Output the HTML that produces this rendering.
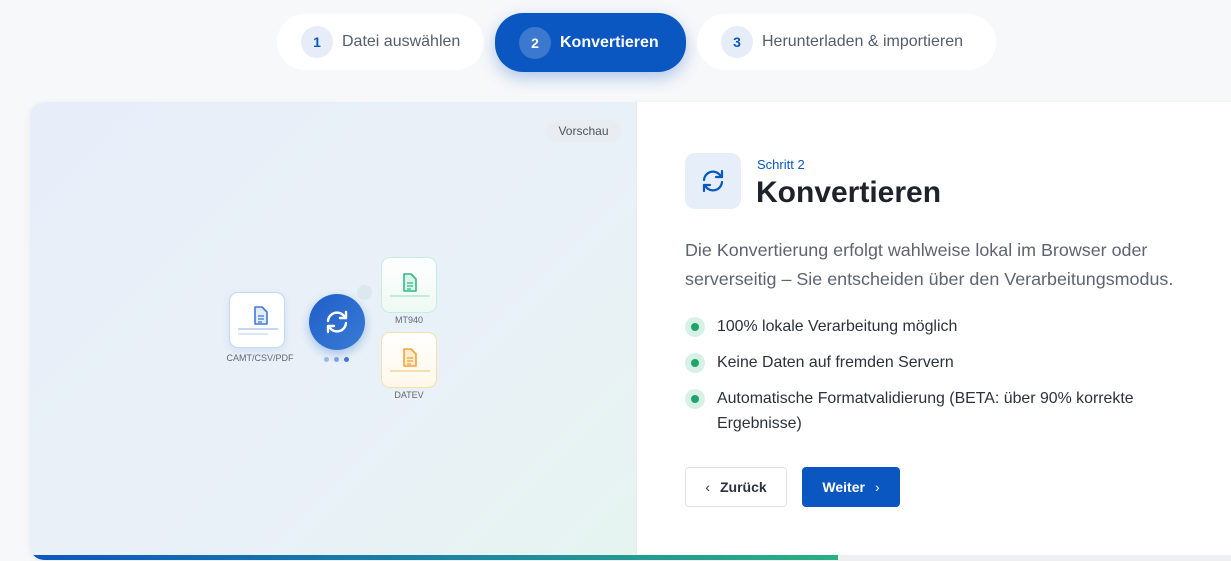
<!DOCTYPE html>
<html><head><meta charset="utf-8"><style>
*{box-sizing:border-box;margin:0;padding:0}
body{width:1231px;height:561px;overflow:hidden;background:#f7f8fa;font-family:"Liberation Sans",sans-serif;position:relative}
.pill{position:absolute;top:14px;height:56px;border-radius:28px;background:#fff;display:flex;align-items:center;padding-left:24px;font-size:16px;color:#555d6b}
.pill .n{width:32px;height:32px;border-radius:50%;background:#e6edf8;color:#0b57c2;font-weight:bold;font-size:14px;display:flex;align-items:center;justify-content:center;margin-right:9px}
.pill.act{background:#0b57c2;color:#fff;font-weight:bold;top:13px;height:59px;box-shadow:0 6px 16px rgba(11,87,194,.3)}
.pill.act .n{background:rgba(255,255,255,.2);color:#fff}
.card{position:absolute;left:30px;top:102px;width:1220px;height:458px;border-radius:14px;overflow:hidden;background:#fff;box-shadow:0 2px 8px rgba(0,0,0,.06)}
.left{position:absolute;left:0;top:0;width:607px;height:100%;background:linear-gradient(135deg,#e8eef9 0%,#e9f1f8 60%,#e6f4f0 100%);border-right:1px solid #e8ecf1}
.vor{position:absolute;left:516px;top:18px;width:75px;height:22px;border-radius:11px;background:#e9edf2;font-size:12px;color:#4a5160;text-align:center;line-height:22px}
.doc{position:absolute;width:56px;height:56px;border-radius:9px;background:#fff}
.lbl{position:absolute;font-size:9px;color:#5f6672;text-align:center}
.prog{position:absolute;left:0;bottom:0;width:100%;height:5px;background:#eef0f3}
.prog div{width:808px;height:100%;background:linear-gradient(90deg,#0b57c2,#2bb083)}
.li{display:flex;align-items:flex-start;font-size:15.9px;color:#2c323b;line-height:25px;margin-bottom:11px}
.dot{width:20px;height:20px;border-radius:50%;background:#d8f1e6;flex:none;margin:3px 12px 0 0;display:flex;align-items:center;justify-content:center}
.dot i{width:8px;height:8px;border-radius:50%;background:#20a36b}
</style></head><body>
<div class="pill" style="left:277px;width:207px"><span class="n">1</span>Datei auswählen</div>
<div class="pill act" style="left:495px;width:191px"><span class="n">2</span>Konvertieren</div>
<div class="pill" style="left:697px;width:299px"><span class="n">3</span>Herunterladen &amp; importieren</div>
<div class="card">
<div class="left">
<div class="vor">Vorschau</div>
<div class="doc" style="left:199px;top:190px;border:1px solid #c8d8f3;box-shadow:0 3px 8px rgba(11,87,194,.1)">
<svg width="56" height="56" viewBox="0 0 56 56"><path d="M25 14h7l5 5v12h-12z" fill="#e3ecfb" stroke="#3f7ad8" stroke-width="1.6" stroke-linejoin="round"/><path d="M28 23h6M28 26h6M28 29h4" stroke="#3f7ad8" stroke-width="1.3"/><path d="M8 36h40" stroke="#c5d6f3" stroke-width="2"/><path d="M8 41h30" stroke="#dbe5f6" stroke-width="2"/></svg></div>
<div class="lbl" style="left:190px;top:251px;width:80px">CAMT/CSV/PDF</div>
<div style="position:absolute;left:279px;top:192px;width:56px;height:56px;border-radius:50%;background:linear-gradient(135deg,#1f5fc8,#3a7bd5);box-shadow:0 4px 10px rgba(11,87,194,.3)">
<svg width="56" height="56" viewBox="0 0 56 56" fill="none" stroke="#fff" stroke-width="2.4" stroke-linecap="round" stroke-linejoin="round"><path d="M19 27a9 9 0 0 1 16-5l2 2M37 29a9 9 0 0 1-16 5l-2-2"/><path d="M37 18v6h-6M19 38v-6h6"/></svg></div>
<div style="position:absolute;left:327px;top:183px;width:15px;height:15px;border-radius:50%;background:#dbe9ee"></div>
<div style="position:absolute;left:294px;top:255px;width:5px;height:5px;border-radius:50%;background:#9cb9e6"></div>
<div style="position:absolute;left:304px;top:255px;width:5px;height:5px;border-radius:50%;background:#7ea2df"></div>
<div style="position:absolute;left:314px;top:255px;width:5px;height:5px;border-radius:50%;background:#3f74cf"></div>
<div class="doc" style="left:351px;top:155px;border:1px solid #c6eedc;background:linear-gradient(#fff,#eef9f4)">
<svg width="56" height="56" viewBox="0 0 56 56"><path d="M22 16h7l5 5v12h-12z" fill="#d9f4e8" stroke="#35b886" stroke-width="1.6" stroke-linejoin="round"/><path d="M25 25h6M25 28h6M25 31h4" stroke="#35b886" stroke-width="1.3"/><path d="M8 38h40" stroke="#c3ecd9" stroke-width="2"/></svg></div>
<div class="lbl" style="left:351px;top:213px;width:56px">MT940</div>
<div class="doc" style="left:351px;top:230px;border:1px solid #f7dfae;background:linear-gradient(#fff,#fff8e9)">
<svg width="56" height="56" viewBox="0 0 56 56"><path d="M22 16h7l5 5v12h-12z" fill="#fdeccc" stroke="#f1a43a" stroke-width="1.6" stroke-linejoin="round"/><path d="M25 25h6M25 28h6M25 31h4" stroke="#f1a43a" stroke-width="1.3"/><path d="M8 38h40" stroke="#f6ddb0" stroke-width="2"/></svg></div>
<div class="lbl" style="left:351px;top:288px;width:56px">DATEV</div>
</div>
<div style="position:absolute;left:655px;top:51px;width:56px;height:56px;border-radius:10px;background:#e6eef9">
<svg width="56" height="56" viewBox="0 0 56 56" fill="none" stroke="#0b57c2" stroke-width="2.2" stroke-linecap="round" stroke-linejoin="round"><path d="M19 27a9 9 0 0 1 16-5l2 2M37 29a9 9 0 0 1-16 5l-2-2"/><path d="M37 18v6h-6M19 38v-6h6"/></svg></div>
<div style="position:absolute;left:727px;top:55px;font-size:13px;color:#0b57c2">Schritt 2</div>
<div style="position:absolute;left:726px;top:74px;font-size:30px;font-weight:bold;color:#1d222b">Konvertieren</div>
<div style="position:absolute;left:655px;top:134px;width:520px;font-size:17.9px;line-height:29px;color:#5d6470">Die Konvertierung erfolgt wahlweise lokal im Browser oder serverseitig – Sie entscheiden über den Verarbeitungsmodus.</div>
<div style="position:absolute;left:655px;top:212px;width:470px">
<div class="li"><span class="dot"><i></i></span>100% lokale Verarbeitung möglich</div>
<div class="li"><span class="dot"><i></i></span>Keine Daten auf fremden Servern</div>
<div class="li"><span class="dot"><i></i></span>Automatische Formatvalidierung (BETA: über 90% korrekte Ergebnisse)</div>
</div>
<div style="position:absolute;left:655px;top:365px;width:102px;height:40px;border:1px solid #dde1e6;border-radius:4px;font-size:14px;font-weight:bold;color:#2c323b;display:flex;align-items:center;justify-content:center;gap:10px"><span style="font-weight:normal">‹</span>Zurück</div>
<div style="position:absolute;left:772px;top:365px;width:98px;height:40px;background:#0b57c2;border-radius:4px;font-size:14px;font-weight:bold;color:#fff;display:flex;align-items:center;justify-content:center;gap:10px">Weiter<span style="font-weight:normal">›</span></div>
<div class="prog"><div></div></div>
</div>
</body></html>
